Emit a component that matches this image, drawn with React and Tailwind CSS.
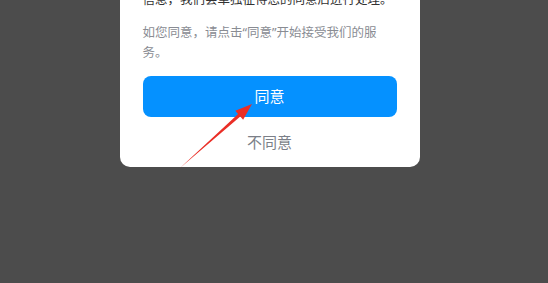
import React from "react";

export default function App() {
  return (
    <div
      className="relative w-[548px] h-[283px] overflow-hidden bg-[#4c4c4c] flex justify-center items-start"
      style={{ fontFamily: '"Noto Sans", "Noto Sans CJK SC", sans-serif' }}
    >
      <div className="-mt-[30px] ml-[-9px] w-[300px] bg-white rounded-[10px] px-[23px] pt-[20px] pb-[13px] flex flex-col">
        <p className="text-[12.5px] leading-[20px] text-[#333333] whitespace-nowrap">
          信息，我们会单独征得您的同意后进行处理。
        </p>
        <p className="mt-[13px] pr-[8px] text-[12.5px] leading-[20px] text-[#898c93]">
          如您同意，请点击“同意”开始接受我们的服务。
        </p>
        <button className="mt-[13px] h-[41px] w-full rounded-[8px] bg-[#0591ff] text-white text-[15px] flex items-center justify-center">
          同意
        </button>
        <button className="mt-[13px] h-[24px] w-full text-[15px] leading-[24px] text-[#7b7f88] flex items-center justify-center">
          不同意
        </button>
      </div>
      <svg
        className="absolute left-0 top-0 pointer-events-none"
        width="548"
        height="283"
        viewBox="0 0 548 283"
      >
        <polygon
          points="180,168 238.1,114.0 235.3,110.7 252,104 243.1,119.7 240.3,116.4"
          fill="#ea2e26"
        />
      </svg>
    </div>
  );
}
